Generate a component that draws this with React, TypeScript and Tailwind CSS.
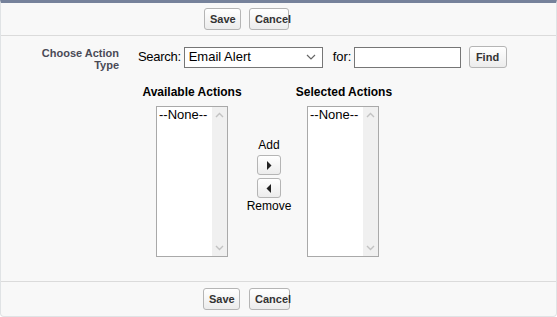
function Btn({ children, className = "" }: { children: React.ReactNode; className?: string }) {
  return (
    <button
      type="button"
      className={
        "h-[22px] rounded-[3px] border border-[#b5b5b5] bg-gradient-to-b from-white to-[#ececec] px-[5px] text-[11px] font-bold leading-none text-[#333] " +
        className
      }
    >
      {children}
    </button>
  );
}

function Chevron({ up }: { up?: boolean }) {
  return (
    <svg width="9" height="6" viewBox="0 0 9 6" className={up ? "rotate-180" : ""}>
      <path d="M1 1 L4.5 4.5 L8 1" fill="none" stroke="#c2c2c2" strokeWidth="1.4" />
    </svg>
  );
}

function ListBox() {
  return (
    <div className="flex h-[151px] w-[72px] border border-[#a9a9a9] bg-white">
      <div className="flex-1 pl-[2px] text-[13px] leading-[15px] text-black">--None--</div>
      <div className="flex w-[15px] flex-col items-center justify-between bg-[#f0f0f0] py-[5px]">
        <Chevron up />
        <Chevron />
      </div>
    </div>
  );
}

function ArrowBtn({ left }: { left?: boolean }) {
  return (
    <button
      type="button"
      className="flex h-[20px] w-[24px] items-center justify-center rounded-[3px] border border-[#b5b5b5] bg-gradient-to-b from-white to-[#ececec]"
    >
      <svg width="6" height="9" viewBox="0 0 6 9">
        <path d={left ? "M5 0 L0.5 4.5 L5 9 Z" : "M1 0 L5.5 4.5 L1 9 Z"} fill="#222" />
      </svg>
    </button>
  );
}

export default function App() {
  return (
    <div className="h-[317px] w-[557px] bg-white font-['Liberation_Sans',Arial,sans-serif]">
      <div className="flex h-[317px] flex-col rounded-b-[4px] border border-t-[3px] border-[#e0e3e5] border-t-[#76829b] bg-[#f8f8f8]">
        <div className="flex h-[32px] items-center gap-[8px] pl-[203px]">
          <Btn className="w-[37px]">Save</Btn>
          <Btn className="w-[40px]">Cancel</Btn>
        </div>

        <div className="h-[247px] border-y border-[#dbdbdb]">
          <div className="flex items-start pt-[10px]">
            <div className="w-[118px] pt-[1px] text-right text-[11px] font-bold leading-[12px] text-[#4a4a56]">
              Choose Action
              <br />
              Type
            </div>
            <div className="ml-[19px] flex items-center">
              <span className="text-[13px] tracking-[-0.3px] text-black">Search:</span>
              <div className="ml-[3px] flex h-[21px] w-[139px] items-center justify-between border border-[#767676] bg-white pl-[4px] pr-[6px]">
                <span className="text-[13px] text-black">Email Alert</span>
                <svg width="10" height="6" viewBox="0 0 10 6">
                  <path d="M1 1 L5 5 L9 1" fill="none" stroke="#666" strokeWidth="1.2" />
                </svg>
              </div>
              <span className="ml-[10px] text-[13px] text-black">for:</span>
              <div className="ml-[2px] h-[21px] w-[107px] border border-[#767676] bg-white" />
              <Btn className="ml-[8px] w-[38px]">Find</Btn>
            </div>
          </div>

          <div className="mt-[14px] flex items-start pl-[136px]">
            <div className="flex w-[110px] flex-col items-center">
              <div className="text-[12px] font-bold leading-[14px] text-black">Available Actions</div>
              <div className="mt-[7px]">
                <ListBox />
              </div>
            </div>
            <div className="flex w-[44px] flex-col items-center pt-[53px]">
              <span className="text-[12px] leading-[14px] text-black">Add</span>
              <div className="mt-[3px] flex flex-col gap-[3px]">
                <ArrowBtn />
                <ArrowBtn left />
              </div>
              <span className="mt-[1px] text-[12px] leading-[14px] text-black">Remove</span>
            </div>
            <div className="flex w-[106px] flex-col items-center">
              <div className="text-[12px] font-bold leading-[14px] text-black">Selected Actions</div>
              <div className="mt-[7px] mr-[2px]">
                <ListBox />
              </div>
            </div>
          </div>
        </div>

        <div className="flex flex-1 items-center gap-[9px] pl-[202px]">
          <Btn className="w-[37px]">Save</Btn>
          <Btn className="w-[41px]">Cancel</Btn>
        </div>
      </div>
    </div>
  );
}
